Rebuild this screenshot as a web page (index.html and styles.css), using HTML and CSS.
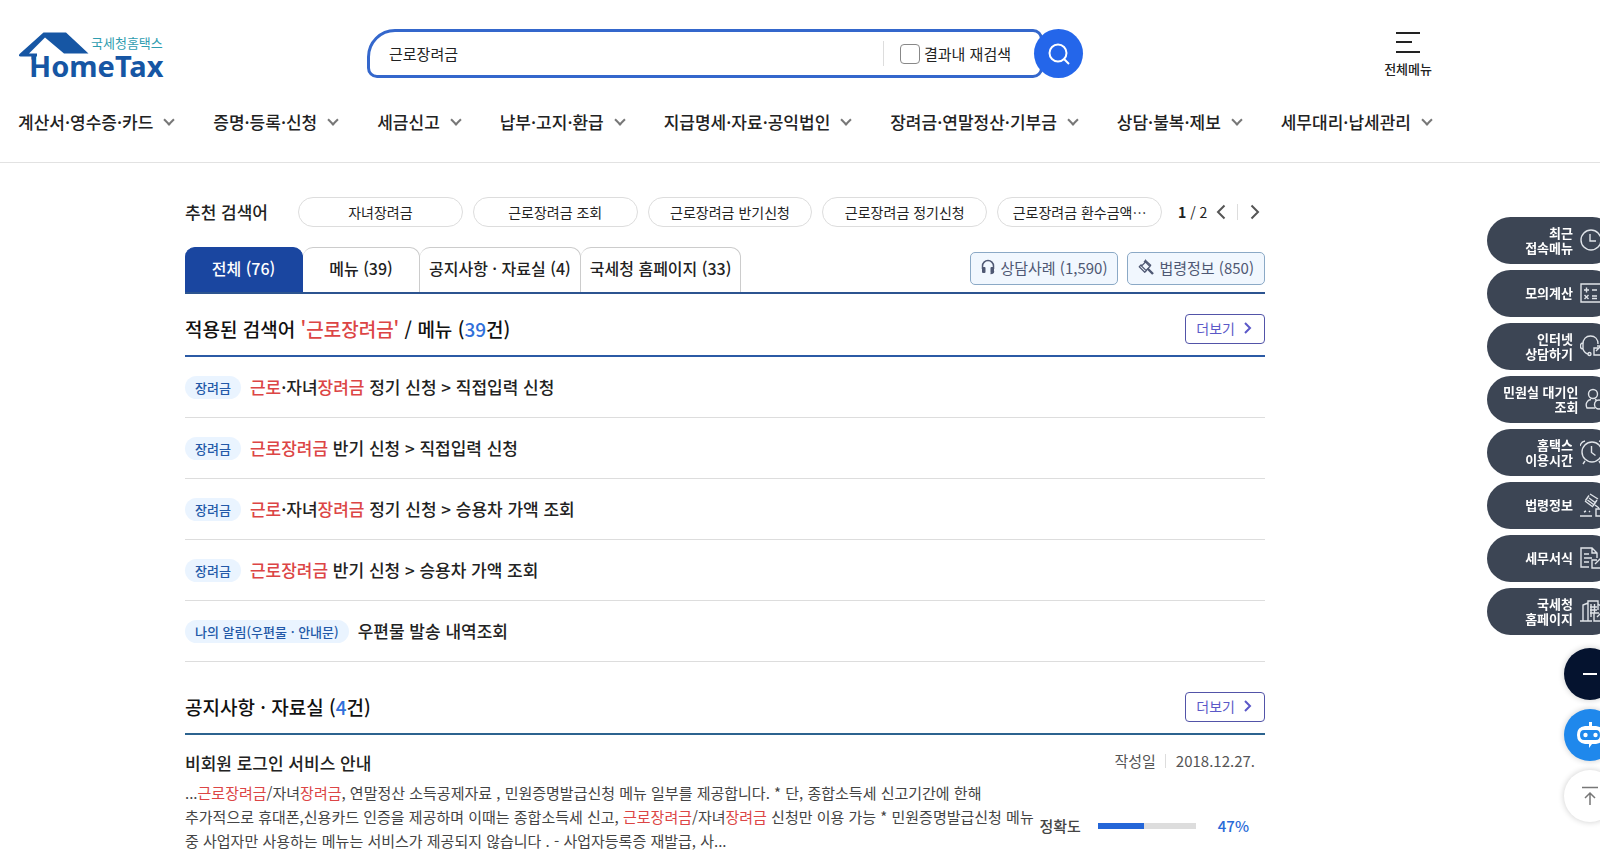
FILE: index.html
```html
<!DOCTYPE html>
<html lang="ko">
<head>
  <meta charset="UTF-8">
  <meta name="viewport" content="width=device-width, initial-scale=1.0">
  <title>국세청 홈택스 - 통합검색</title>
  <link rel="stylesheet" href="styles.css">
</head>
<body>
  <header class="header">
    <div class="header-top">
      <a class="logo" href="#" aria-label="국세청홈택스 HomeTax">
        <svg width="150" height="65" viewBox="0 -3 150 65">
          <path fill="#1656a4" d="M25.500 8.500H48L70.500 29.500H46L27 13.500 11 29.500h8v3h-1v3h-4.500V32.500H2.500Q0 32 1.500 30z"/>
          <text class="logo-ko" x="73" y="24">국세청홈택스</text>
          <text class="logo-en" x="11" y="53">HomeTax</text>
        </svg>
      </a>
      <form class="search">
        <div class="search-box">
          <input class="search-input" type="text" value="근로장려금" aria-label="검색어">
          <label class="search-again"><input type="checkbox">결과내 재검색</label>
        </div>
        <button class="search-btn" type="submit" aria-label="검색">
          <svg width="24" height="24" viewBox="0 0 24 24" fill="none" stroke="#fff" stroke-width="2"><circle cx="11" cy="11" r="8.500"/><path d="M17 17l5 5"/></svg>
        </button>
      </form>
      <button class="all-menu" type="button">
        <svg width="26" height="22" viewBox="0 0 26 22" stroke="#222" stroke-width="2"><path d="M1 1h24M1 10h16M1 20h24"/></svg>
        <span>전체메뉴</span>
      </button>
    </div>
    <nav class="nav">
      <a href="#">계산서·영수증·카드<i class="chev"></i></a>
      <a href="#">증명·등록·신청<i class="chev"></i></a>
      <a href="#">세금신고<i class="chev"></i></a>
      <a href="#">납부·고지·환급<i class="chev"></i></a>
      <a href="#">지급명세·자료·공익법인<i class="chev"></i></a>
      <a href="#">장려금·연말정산·기부금<i class="chev"></i></a>
      <a href="#">상담·불복·제보<i class="chev"></i></a>
      <a href="#">세무대리·납세관리<i class="chev"></i></a>
    </nav>
  </header>

  <div class="wrap">
    <main class="content">
      <div class="recommend">
        <strong class="recommend-title">추천 검색어</strong>
        <div class="pills">
          <a href="#">자녀장려금</a>
          <a href="#">근로장려금 조회</a>
          <a href="#">근로장려금 반기신청</a>
          <a href="#">근로장려금 정기신청</a>
          <a href="#">근로장려금 환수금액⋯</a>
        </div>
        <div class="pager">
          <span><b>1</b> / 2</span>
          <button type="button" aria-label="이전"><svg width="10" height="16" viewBox="0 0 10 16"><path d="M8.500 1.500L2 8l6.500 6.500"/></svg></button>
          <button type="button" aria-label="다음"><svg width="10" height="16" viewBox="0 0 10 16"><path d="M1.500 1.500L8 8l-6.500 6.500"/></svg></button>
        </div>
      </div>

      <div class="tabs">
        <button class="tab active" type="button">전체 (76)</button>
        <button class="tab" type="button">메뉴 (39)</button>
        <button class="tab" type="button">공지사항 · 자료실 (4)</button>
        <button class="tab" type="button">국세청 홈페이지 (33)</button>
        <div class="links">
          <a href="#">
            <svg width="14" height="16" viewBox="0 0 14 16"><path fill="none" stroke="#4f5873" stroke-width="1.500" d="M1.500 10V7a5.500 5.500 0 0 1 11 0v3M12.500 12q0 2.500-3 2.500"/><rect x="1" y="8" width="3.500" height="6" rx="1" fill="#4f5873"/><rect x="9.500" y="8" width="3.500" height="6" rx="1" fill="#4f5873"/></svg>
            상담사례 (1,590)
          </a>
          <a href="#">
            <svg width="16" height="16" viewBox="0 0 16 16" fill="none" stroke="#4f5873"><path stroke-width="1.200" d="M7 1l6 5.500M1 7.500l6 6M7.500 3L3.500 7l4.500 4.500 4-4zM8 .8L6 3M13 6l-2 2.500M3.500 5.500L1 8M9 11l-2.500 2.500"/><path stroke-width="2.400" d="M9.500 9.500l5.500 5.500"/></svg>
            법령정보 (850)
          </a>
        </div>
      </div>

      <section class="result">
        <div class="result-head">
          <h2>적용된 검색어 <em>'근로장려금'</em> / 메뉴 (<span>39</span>건)</h2>
          <a class="more" href="#">더보기 <svg width="8" height="12" viewBox="0 0 8 12"><path d="M1 1l5 5-5 5"/></svg></a>
        </div>
        <ul class="menu-list">
          <li><span class="tag">장려금</span><a href="#"><em>근로</em>·자녀<em>장려금</em> 정기 신청 &gt; 직접입력 신청</a></li>
          <li><span class="tag">장려금</span><a href="#"><em>근로장려금</em> 반기 신청 &gt; 직접입력 신청</a></li>
          <li><span class="tag">장려금</span><a href="#"><em>근로</em>·자녀<em>장려금</em> 정기 신청 &gt; 승용차 가액 조회</a></li>
          <li><span class="tag">장려금</span><a href="#"><em>근로장려금</em> 반기 신청 &gt; 승용차 가액 조회</a></li>
          <li><span class="tag">나의 알림(우편물 · 안내문)</span><a href="#">우편물 발송 내역조회</a></li>
        </ul>
      </section>

      <section class="result notice">
        <div class="result-head">
          <h2>공지사항 · 자료실 (<span>4</span>건)</h2>
          <a class="more" href="#">더보기 <svg width="8" height="12" viewBox="0 0 8 12"><path d="M1 1l5 5-5 5"/></svg></a>
        </div>
        <article class="post">
          <div class="post-head">
            <h3>비회원 로그인 서비스 안내</h3>
            <div class="post-date"><span>작성일</span><span>2018.12.27.</span></div>
          </div>
          <div class="post-body">
            <p>...<em>근로장려금</em>/자녀<em>장려금</em>, 연말정산 소득공제자료 , 민원증명발급신청 메뉴 일부를 제공합니다. * 단, 종합소득세 신고기간에 한해<br>추가적으로 휴대폰,신용카드 인증을 제공하며 이때는 종합소득세 신고, <em>근로장려금</em>/자녀<em>장려금</em> 신청만 이용 가능 * 민원증명발급신청 메뉴<br>중 사업자만 사용하는 메뉴는 서비스가 제공되지 않습니다 . - 사업자등록증 재발급, 사...</p>
            <div class="accuracy">
              <span>정확도</span>
              <div class="bar"><div class="bar-fill" style="width:47%"></div></div>
              <b>47%</b>
            </div>
          </div>
        </article>
      </section>
    </main>
  </div>

  <aside class="quick">
    <a class="quick-item" href="#"><span>최근<br>접속메뉴</span>
      <svg viewBox="0 0 22 22"><circle cx="11" cy="11" r="10"/><path d="M10 5v7h6"/></svg></a>
    <a class="quick-item" href="#"><span>모의계산</span>
      <svg viewBox="0 0 22 22"><path d="M1 2h20v18H1zM4 8h5M6.500 5.500v5M12 8h5M4.500 13l4 4M8.500 13l-4 4M12 14h5M12 16.500h5"/></svg></a>
    <a class="quick-item" href="#"><span>인터넷<br>상담하기</span>
      <svg viewBox="0 0 22 22"><path d="M3 9C3 4 6 1 10.500 1S18 4 18 9M3 8C-.5 8-.5 14 3 14zM3 14c1 3 3 4.500 5 5M19 13h-5v7h8M16 16l5-5M17 11h4"/><circle cx="9.500" cy="19" r="1.500"/></svg></a>
    <a class="quick-item" href="#"><span>민원실 대기인<br>조회</span>
      <svg viewBox="0 0 22 22"><circle cx="8" cy="6" r="4.500"/><path d="M10 20H2c-2-4 0-8 4-8.500M10 11.500l2 1"/><circle cx="14" cy="16.500" r="4.500"/></svg></a>
    <a class="quick-item" href="#"><span>홈택스<br>이용시간</span>
      <svg class="wide" viewBox="0 0 26 26"><circle cx="12" cy="13" r="10"/><path d="M11.500 7v6.500l4 3M0 7q1-4 5-5M24 7q-1-4-5-5M5 22l-2 3M19 22l2 3"/></svg></a>
    <a class="quick-item" href="#"><span>법령정보</span>
      <svg class="wide" viewBox="0 0 26 26"><path d="M0 24h12M4 20l2-1M9 20l1-1M10 2l8 5M5 9l8 6M9 3.500L5.500 8.500M17 8l-4 6M9 6l6 4.500M7.500 8l6 4.500M15 13l4 3M21 17h-5v7h8"/></svg></a>
    <a class="quick-item" href="#"><span>세무서식</span>
      <svg viewBox="0 0 22 22"><path d="M9 20H1V1h11l5 5v5M12 1v5h5M4 7h5M4 11h8M4 15h5M17 13h-5v8h9M15 17l6-6"/></svg></a>
    <a class="quick-item" href="#"><span>국세청<br>홈페이지</span>
      <svg class="wide" viewBox="0 0 26 26"><path d="M0 23h12M3 23V7l5-2M8 23V3h10v9M18 6l3 2v4M11 6v13M14.500 6v9M10 9h7M10 12h7M10 15h4M19 15h-5v8h9M17 19l6-6"/></svg></a>
    <div class="round-btns">
      <button class="round dark" type="button" aria-label="닫기"><svg width="14" height="4" viewBox="0 0 14 4"><path d="M0 2h14" stroke="#fff" stroke-width="2"/></svg></button>
      <button class="round blue" type="button" aria-label="챗봇"><svg width="30" height="28" viewBox="0 0 30 28"><path fill="#fff" fill-rule="evenodd" d="M14 5V1h3v4h4q8 1 8 9t-8 9h-4l-3 4v-4h-4q-8-1-8-9t8-9zM9 9q-4 0-4 5t4 5h12q4 0 4-5t-4-5z"/><circle cx="10.500" cy="14" r="2.200" fill="#fff"/><circle cx="20.500" cy="14" r="2.200" fill="#fff"/></svg></button>
      <button class="round white" type="button" aria-label="맨 위로"><svg width="16" height="20" viewBox="0 0 16 20" fill="none" stroke="#777" stroke-width="1.500"><path d="M0 1.500h16M8 19V7M3 12l5-5 5 5"/></svg></button>
    </div>
  </aside>
</body>
</html>
```
FILE: styles.css
```css
*{
  box-sizing: border-box;
}
body{
  margin: 0;
  font-family: "Noto Sans CJK KR", "Noto Sans", sans-serif;
  font-size: 15px;
  color: #222;
  background-color: #fff;
}
a{
  color: inherit;
  text-decoration: none;
}
button{
  font-family: inherit;
  color: inherit;
  background: none;
  border: none;
  padding: 0;
  cursor: pointer;
}
em{
  color: #dc4545;
  font-style: normal;
}
h2, h3, p, ul{
  margin: 0;
  padding: 0;
}

/* header */
.header{
  border-bottom: 1px solid #e2e2e2;
}
.header-top{
  display: grid;
  grid-template-columns: 1fr auto 1fr;
  align-items: center;
  max-width: 1450px;
  padding: 21px 18px 0;
}
.logo svg{
  display: block;
}
.logo-ko{
  font-size: 13px;
  fill: #2f9db0;
}
.logo-en{
  font-family: "Noto Sans", sans-serif;
  font-size: 29px;
  font-weight: bold;
  fill: #1656a4;
}
.search{
  display: flex;
}
.search-box{
  display: flex;
  align-items: center;
  width: 676px;
  height: 49px;
  border: 3px solid #3467cc;
  border-radius: 28px 10px 10px 10px;
  padding: 0 29px 0 19px;
}
.search-input{
  flex: 1;
  min-width: 0;
  border: none;
  outline: none;
  padding: 0;
  font-family: inherit;
  font-size: 15px;
  color: #222;
}
.search-again{
  display: flex;
  align-items: center;
  gap: 4px;
  border-left: 1px solid #ddd;
  padding-left: 16px;
  line-height: 25px;
}
.search-again input{
  appearance: none;
  width: 20px;
  height: 20px;
  margin: 0;
  border: 1px solid #888;
  border-radius: 4px;
}
.search-btn{
  display: flex;
  align-items: center;
  justify-content: center;
  width: 49px;
  height: 49px;
  margin-left: -9px;
  border-radius: 50%;
  background-color: #2466ea;
}
.all-menu{
  justify-self: end;
  display: flex;
  flex-direction: column;
  align-items: center;
  gap: 6px;
  padding-top: 3px;
  font-size: 13px;
  line-height: 18px;
  font-weight: 500;
}
.nav{
  display: flex;
  justify-content: space-between;
  max-width: 1450px;
  padding: 24px 18px 28px;
  font-size: 17px;
  line-height: 24px;
  font-weight: 500;
  white-space: nowrap;
}
.nav a{
  display: flex;
  align-items: center;
  gap: 12px;
}
.chev{
  width: 8px;
  height: 8px;
  margin: 0 1px 4px 0;
  border-right: 2px solid #777;
  border-bottom: 2px solid #777;
  transform: rotate(45deg);
}

/* search result */
.wrap{
  max-width: 1450px;
  padding: 34px 20px 0;
}
.content{
  max-width: 1080px;
  margin: 0 auto;
}
.recommend{
  display: flex;
  align-items: center;
  margin-bottom: 20px;
}
.recommend-title{
  font-size: 17px;
  line-height: 24px;
  font-weight: 500;
  width: 113px;
}
.pills{
  flex: 1;
  display: flex;
  gap: 10px;
}
.pills a{
  flex: 1;
  border: 1px solid #ddd;
  border-radius: 16px;
  font-size: 14px;
  line-height: 28px;
  text-align: center;
  white-space: nowrap;
}
.pager{
  display: flex;
  align-items: center;
  width: 103px;
  padding-left: 16px;
  font-size: 14px;
  line-height: 16px;
}
.pager button{
  display: flex;
  margin-left: 9px;
}
.pager button + button{
  border-left: 1px solid #ddd;
  margin-left: 11px;
  padding-left: 12px;
}
.pager path{
  fill: none;
  stroke: #555;
  stroke-width: 2;
}
.tabs{
  display: flex;
  border-bottom: 2px solid #2c5490;
}
.tab{
  height: 45px;
  padding: 0 9px 4px;
  border: 1px solid #ccc;
  border-left-width: 0;
  border-bottom: none;
  border-radius: 10px 10px 0 0;
  font-size: 16px;
  font-weight: 500;
  min-width: 117px;
}
.tab.active{
  min-width: 118px;
  border-color: #1a46a0;
  background-color: #1a46a0;
  color: #fff;
}
.links{
  display: flex;
  align-items: center;
  gap: 9px;
  margin-left: auto;
  padding-bottom: 3px;
}
.links a{
  display: flex;
  align-items: center;
  gap: 5px;
  height: 33px;
  padding: 0 10px 2px;
  border: 1px solid #8ba9c6;
  border-radius: 5px;
  background-color: #f1f7fe;
  color: #4f5873;
}
.result-head{
  display: flex;
  justify-content: space-between;
  align-items: center;
  padding: 20px 0 11px;
  border-bottom: 2px solid #2b5aa5;
}
.result-head h2{
  color: #111;
  font-size: 19px;
  line-height: 28px;
  font-weight: 500;
}
.result-head h2 span{
  color: #3170da;
}
.more{
  display: flex;
  align-items: center;
  gap: 9px;
  height: 30px;
  padding: 0 12px 2px 10px;
  border: 1px solid #5254a8;
  border-radius: 4px;
  color: #5b58c8;
  font-size: 14px;
}
.more path{
  fill: none;
  stroke: #5b58c8;
  stroke-width: 2;
}
.menu-list{
  list-style: none;
}
.menu-list li{
  display: flex;
  align-items: center;
  gap: 9px;
  height: 61px;
  border-bottom: 1px solid #ddd;
  font-size: 17px;
  line-height: 24px;
  font-weight: 500;
}
.tag{
  padding: 0 10px;
  border-radius: 12px;
  background-color: #eaf4ff;
  color: #2359a8;
  font-size: 13px;
  line-height: 23px;
}
.notice{
  margin-top: 10px;
}
.notice .result-head{
  border-color: #2c638f;
}
.post{
  padding-top: 16px;
}
.post-head{
  display: flex;
  justify-content: space-between;
  line-height: 24px;
  margin-bottom: 6px;
}
.post-head h3{
  font-size: 17px;
  font-weight: 500;
}
.post-date{
  display: flex;
  align-items: center;
  padding: 0 10px 4px 0;
  color: #555;
  line-height: 14px;
}
.post-date span + span{
  border-left: 1px solid #ddd;
  margin-left: 9px;
  padding-left: 10px;
}
.post-body{
  display: flex;
  justify-content: space-between;
  color: #444;
  line-height: 24px;
  white-space: nowrap;
}
.accuracy{
  display: flex;
  align-items: center;
  padding: 18px 16px 0 0;
  font-weight: 500;
}
.accuracy b{
  color: #2a6bd8;
  font-weight: 500;
}
.bar{
  width: 98px;
  height: 6px;
  margin: 0 22px 0 17px;
  background-color: #ddd;
}
.bar-fill{
  height: 100%;
  background-color: #2466d8;
}

/* quick menu, runs off the right edge */
.quick{
  position: fixed;
  top: 217px;
  right: -16px;
  width: 129px;
}
.quick-item{
  display: flex;
  align-items: center;
  gap: 7px;
  height: 47px;
  margin-bottom: 6px;
  padding: 0 0 2px 16px;
  border-radius: 24px;
  background-color: #3c4554;
  color: #fff;
  font-size: 13px;
  line-height: 15px;
  font-weight: bold;
  white-space: nowrap;
}
.quick-item span{
  min-width: 70px;
  text-align: right;
}
.quick-item svg{
  flex: none;
  width: 22px;
  height: 22px;
  fill: none;
  stroke: #dfe3e8;
  stroke-width: 1.4;
}
.quick-item svg.wide{
  width: 26px;
  height: 26px;
}
.round-btns{
  display: flex;
  flex-direction: column;
  align-items: flex-end;
  gap: 9px;
  padding-top: 7px;
}
.round{
  display: flex;
  align-items: center;
  justify-content: center;
  width: 52px;
  height: 52px;
  border-radius: 50%;
  box-shadow: 0 0 6px rgba(0,0,0,.2);
}
.dark{
  background-color: #05132f;
}
.blue{
  background-color: #1f88ec;
}
.white{
  background-color: #fff;
}
```
